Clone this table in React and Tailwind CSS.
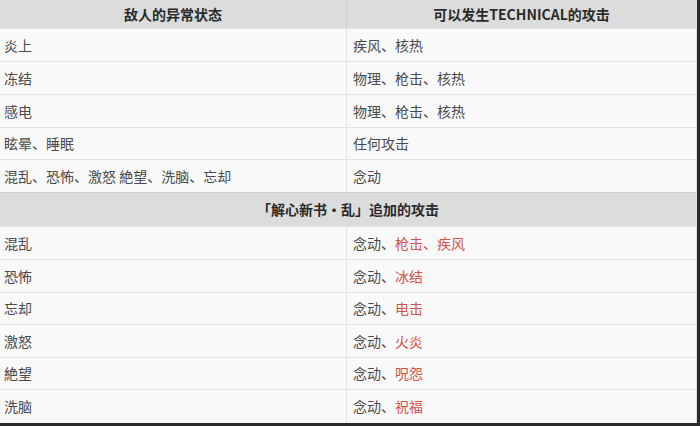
import React from 'react';

const font = { fontFamily: '"Microsoft YaHei", "Noto Sans CJK SC", "Noto Sans", sans-serif' };

const topRows = [
  ['炎上', '疾风、核热'],
  ['冻结', '物理、枪击、核热'],
  ['感电', '物理、枪击、核热'],
  ['眩晕、睡眠', '任何攻击'],
  ['混乱、恐怖、激怒 絶望、洗脑、忘却', '念动'],
];

const extraRows = [
  ['混乱', '枪击、疾风', 'h-[33px]'],
  ['恐怖', '冰结', 'h-[33px]'],
  ['忘却', '电击', 'h-[32px]'],
  ['激怒', '火炎', 'h-[33px]'],
  ['絶望', '呪怨', 'h-[32px]'],
  ['洗脑', '祝福', 'h-[33px]'],
];

const topHeights = ['h-[33px]', 'h-[33px]', 'h-[33px]', 'h-[32px]', 'h-[33px]'];

const Row = ({ left, right, h }) => (
  <div className={`grid grid-cols-[347px_1fr] ${h} border-t border-[#e2e2e2] bg-[#f9f9f9]`}>
    <div className="flex items-center pl-[4px] border-r border-[#e2e2e2]">{left}</div>
    <div className="flex items-center pl-[6px]">{right}</div>
  </div>
);

export default function App() {
  return (
    <div className="w-[700px] h-[426px] bg-[#2a2a2a] overflow-hidden" style={font}>
      <div className="w-[697px] h-[423px] bg-[#f9f9f9] border-r border-[#dedede] text-[14px] text-[#4a4a4a] flex flex-col">
        {/* 表头 */}
        <div className="grid grid-cols-[347px_1fr] h-[28px] bg-[#dcdcdc] font-bold text-[#2a2a2a]">
          <div className="flex items-center justify-center border-r border-[#cfcfcf]">敌人的异常状态</div>
          <div className="flex items-center justify-center">可以发生TECHNICAL的攻击</div>
        </div>

        {topRows.map(([l, r], i) => (
          <Row key={i} left={l} right={r} h={topHeights[i]} />
        ))}

        {/* 分区标题 */}
        <div className="h-[34px] bg-[#dcdcdc] border-t border-[#d0d0d0] flex items-center justify-center font-bold text-[#2a2a2a]">
          「解心新书·乱」追加的攻击
        </div>

        {extraRows.map(([l, r, h], i) => (
          <Row
            key={i}
            left={l}
            h={h}
            right={
              <span>
                念动、<span className="text-[#d4534a]">{r}</span>
              </span>
            }
          />
        ))}
      </div>
    </div>
  );
}
